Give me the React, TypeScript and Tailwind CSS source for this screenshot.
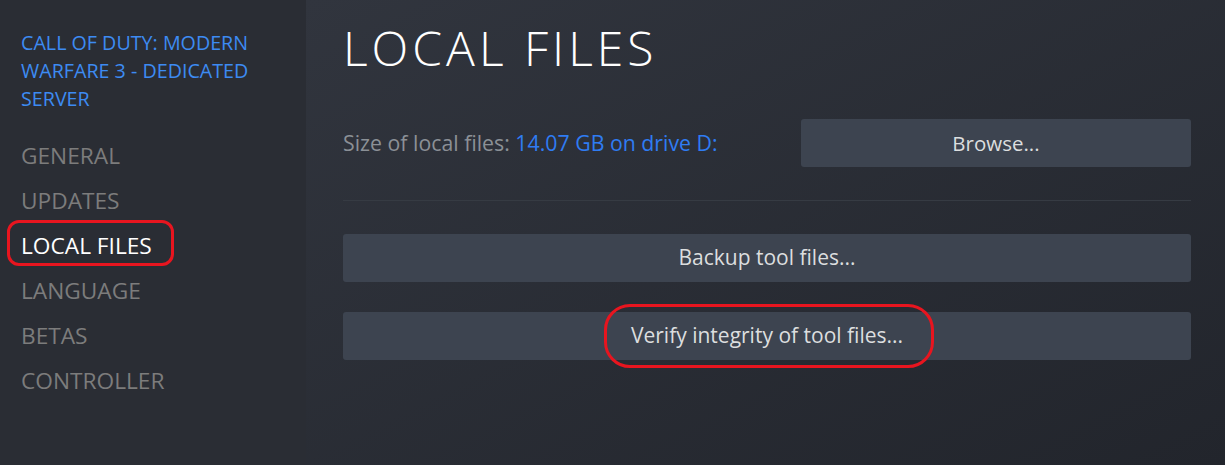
export default function App() {
  const nav = ['GENERAL', 'UPDATES', 'LOCAL FILES', 'LANGUAGE', 'BETAS', 'CONTROLLER']

  return (
    <div
      className="flex h-[465px] w-[1225px] overflow-hidden"
      style={{ fontFamily: '"Open Sans", "Noto Sans", sans-serif' }}
    >
      <aside className="w-[306px] shrink-0 bg-[#2a2d34] pl-[21px] pt-[29px]">
        <div className="text-[19.7px] leading-[28px] text-[#3d8bf2]">
          CALL OF DUTY: MODERN
          <br />
          WARFARE 3 - DEDICATED
          <br />
          SERVER
        </div>
        <ul className="mt-[20px]">
          {nav.map((item) => (
            <li
              key={item}
              className={`relative text-[22.7px] leading-[45px] ${
                item === 'LOCAL FILES' ? 'text-white' : 'text-[#7c7c7c]'
              }`}
            >
              {item}
              {item === 'LOCAL FILES' && (
                <span className="absolute left-[-14px] top-[-3px] h-[46px] w-[167px] rounded-[12px] border-[3px] border-[#e8151f]" />
              )}
            </li>
          ))}
        </ul>
      </aside>

      <main className="flex-1 bg-gradient-to-br from-[#31353e] to-[#22252c] pl-[37px] pr-[34px] pt-[16px]">
        <h1 className="text-[48px] font-light leading-[64px] tracking-[4px] text-white">LOCAL FILES</h1>

        <div className="mt-[39px] flex items-center justify-between">
          <div className="text-[21.3px] text-[#8b9096]">
            Size of local files: <span className="text-[#2f7cf3]">14.07 GB on drive D:</span>
          </div>
          <button className="h-[48px] w-[390px] rounded-[3px] bg-[#3d4450] text-[20.5px] text-[#dcdedf]">
            Browse...
          </button>
        </div>

        <div className="mt-[33px] h-px bg-[#363b43]" />

        <div className="mt-[33px] flex flex-col gap-[30px]">
          <button className="h-[48px] w-full rounded-[3px] bg-[#3d4450] text-[21px] text-[#dcdedf]">
            Backup tool files...
          </button>
          <button className="relative h-[48px] w-full rounded-[3px] bg-[#3d4450] text-[21px] text-[#dcdedf]">
            Verify integrity of tool files...
            <span className="absolute left-[261px] top-[-8px] h-[64px] w-[330px] rounded-[26px] border-[3px] border-[#e8151f]" />
          </button>
        </div>
      </main>
    </div>
  )
}
